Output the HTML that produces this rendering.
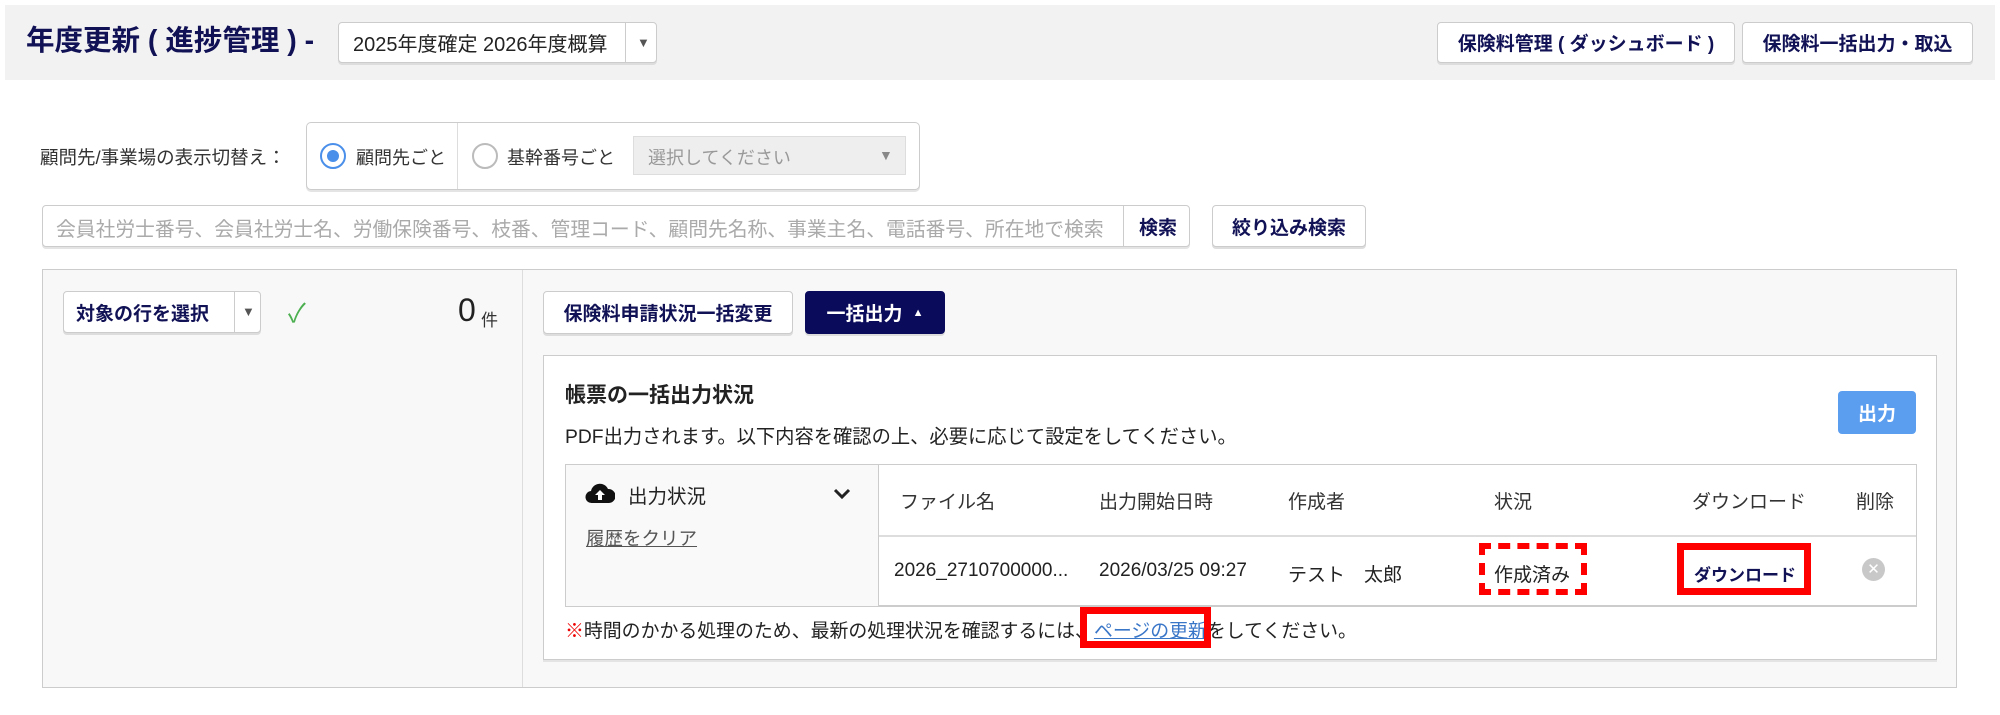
<!DOCTYPE html>
<html><head><meta charset="utf-8"><style>
*{box-sizing:border-box;margin:0;padding:0}
body{width:2000px;height:715px;background:#fff;position:relative;overflow:hidden;font-family:"Liberation Sans","Noto Sans CJK JP",sans-serif;color:#333;font-size:19px}
.a{position:absolute;white-space:nowrap}
.btn{position:absolute;background:#fff;border:1px solid #ccc;border-radius:4px;box-shadow:0 2px 0 #ddd;color:#111156;font-weight:bold;display:flex;align-items:center;justify-content:center;font-size:19px;white-space:nowrap}
.navy{color:#111156}
</style></head><body>
<div class="a" style="left:5px;top:5px;width:1990px;height:75px;background:#f2f2f2"></div>
<div class="a navy" style="left:26px;top:24px;font-size:28.5px;font-weight:bold;line-height:34px">年度更新 ( 進捗管理 ) -</div>
<div class="btn" style="left:338px;top:22px;width:319px;height:41px;justify-content:flex-start;padding-left:14px;font-weight:normal;color:#222;font-size:20px">2025年度確定 2026年度概算<span class="a" style="left:286px;top:0;height:39px;border-left:1px solid #ccc"></span><span class="a" style="left:298px;top:12px;font-size:13px;color:#555">▼</span></div>
<div class="btn" style="left:1437px;top:22px;width:298px;height:41px">保険料管理 ( ダッシュボード )</div>
<div class="btn" style="left:1742px;top:22px;width:231px;height:41px">保険料一括出力・取込</div>

<div class="a" style="left:40px;top:144px;font-size:18.5px;color:#333">顧問先/事業場の表示切替え：</div>
<div class="a" style="left:306px;top:122px;width:614px;height:68px;border:1px solid #ccc;border-radius:5px;background:#fff;box-shadow:0 2px 0 #e4e4e4"></div>
<div class="a" style="left:457px;top:123px;height:66px;border-left:1px solid #ddd"></div>
<div class="a" style="left:320px;top:143px;width:26px;height:26px;border:2px solid #4a8fea;border-radius:50%"></div>
<div class="a" style="left:327px;top:150px;width:12px;height:12px;background:#4a8fea;border-radius:50%"></div>
<div class="a" style="left:356px;top:144px;font-size:18px">顧問先ごと</div>
<div class="a" style="left:472px;top:143px;width:26px;height:26px;border:2px solid #bbb;border-radius:50%"></div>
<div class="a" style="left:507px;top:144px;font-size:18px">基幹番号ごと</div>
<div class="a" style="left:633px;top:136px;width:273px;height:39px;background:#eee;border:1px solid #ddd;color:#999;font-size:18px;padding:7px 14px">選択してください<span class="a" style="left:245px;top:10px;font-size:14px;color:#888">▼</span></div>

<div class="a" style="left:42px;top:205px;width:1148px;height:42px;border:1px solid #ccc;border-radius:4px;box-shadow:0 2px 0 #e4e4e4;background:#fff"></div>
<div class="a" style="left:56px;top:213px;color:#aaa;font-size:19.8px">会員社労士番号、会員社労士名、労働保険番号、枝番、管理コード、顧問先名称、事業主名、電話番号、所在地で検索</div>
<div class="a" style="left:1123px;top:206px;height:40px;border-left:1px solid #ccc"></div>
<div class="a navy" style="left:1139px;top:213px;font-weight:bold">検索</div>
<div class="btn" style="left:1212px;top:205px;width:154px;height:42px">絞り込み検索</div>

<div class="a" style="left:42px;top:269px;width:1915px;height:419px;background:#f8f8f8;border:1px solid #ccc"></div>
<div class="a" style="left:522px;top:270px;height:417px;border-left:1px solid #ddd"></div>
<div class="btn" style="left:63px;top:291px;width:198px;height:42px;justify-content:flex-start;padding-left:12px">対象の行を選択<span class="a" style="left:170px;top:0;height:40px;border-left:1px solid #ccc"></span><span class="a" style="left:178px;top:12px;font-size:13px;color:#555">▼</span></div>
<div class="a" style="left:288px;top:293px;color:#4caf50;font-size:26px">✓</div>
<div class="a" style="left:458px;top:292px;font-size:32px;color:#222">0</div>
<div class="a" style="left:481px;top:306px;font-size:17px">件</div>
<div class="btn" style="left:543px;top:291px;width:250px;height:43px">保険料申請状況一括変更</div>
<div class="btn" style="left:805px;top:291px;width:140px;height:43px;background:#0b0b5c;color:#fff;border-color:#0b0b5c">一括出力 <span style="font-size:11px;margin-left:10px">▲</span></div>

<div class="a" style="left:543px;top:355px;width:1394px;height:305px;background:#fff;border:1px solid #ccc;box-shadow:0 2px 0 #e4e4e4"></div>
<div class="a" style="left:565px;top:379px;font-size:21px;font-weight:bold;color:#222">帳票の一括出力状況</div>
<div class="a" style="left:565px;top:421px;font-size:19.3px;color:#222">PDF出力されます。以下内容を確認の上、必要に応じて設定をしてください。</div>
<div class="a" style="left:1838px;top:391px;width:78px;height:43px;background:#5b9ef0;border-radius:4px;color:#fff;font-weight:bold;font-size:19px;display:flex;align-items:center;justify-content:center">出力</div>

<div class="a" style="left:565px;top:464px;width:1352px;height:143px;border:1px solid #ccc;border-bottom:2px solid #ccc"></div>
<div class="a" style="left:566px;top:465px;width:313px;height:141px;background:#f9f9f9;border-right:1px solid #ccc"></div>
<div class="a" style="left:879px;top:535px;width:1037px;border-top:2px solid #ddd"></div>
<svg class="a" style="left:585px;top:481px" width="30" height="24" viewBox="0 0 30 24"><path d="M7 22 a6 6 0 0 1 -1-12 a9 9 0 0 1 17-2 a7 7 0 0 1 1 14 Z" fill="#111"/><path d="M15 9 l-5 5 h3 v5 h4 v-5 h3z" fill="#fff"/></svg>
<div class="a" style="left:628px;top:480px;font-size:19.5px;color:#222">出力状況</div>
<svg class="a" style="left:833px;top:488px" width="18" height="12" viewBox="0 0 18 12"><path d="M2 2 l7 7 l7-7" stroke="#222" stroke-width="3" fill="none"/></svg>
<div class="a" style="left:586px;top:525px;font-size:18.5px;color:#555;text-decoration:underline">履歴をクリア</div>

<div class="a" style="left:900px;top:487px">ファイル名</div>
<div class="a" style="left:1099px;top:487px">出力開始日時</div>
<div class="a" style="left:1288px;top:487px">作成者</div>
<div class="a" style="left:1494px;top:487px">状況</div>
<div class="a" style="left:1692px;top:487px">ダウンロード</div>
<div class="a" style="left:1856px;top:487px">削除</div>

<div class="a" style="left:894px;top:560px;color:#222">2026_2710700000...</div>
<div class="a" style="left:1099px;top:560px;color:#222">2026/03/25 09:27</div>
<div class="a" style="left:1288px;top:560px;color:#222">テスト　太郎</div>
<div class="a" style="left:1479px;top:543px;width:108px;height:52px;border:6px dashed #f00"></div>
<div class="a" style="left:1494px;top:560px;color:#222">作成済み</div>
<div class="a" style="left:1677px;top:543px;width:134px;height:52px;border:7px solid #f00;background:#fff"></div>
<div class="a navy" style="left:1694px;top:561px;font-weight:bold;font-size:17px">ダウンロード</div>
<div class="a" style="left:1862px;top:558px;width:23px;height:23px;border-radius:50%;background:#c8c8c8;color:#fff;font-size:15px;text-align:center;line-height:23px">✕</div>

<div class="a" style="left:565px;top:616px;font-size:18.9px;color:#222"><span style="color:#e00">※</span>時間のかかる処理のため、最新の処理状況を確認するには、<span style="color:#3a76c8;text-decoration:underline">ページの更新</span>をしてください。</div>
<div class="a" style="left:1080px;top:607px;width:131px;height:41px;border:7px solid #f00"></div>
</body></html>
